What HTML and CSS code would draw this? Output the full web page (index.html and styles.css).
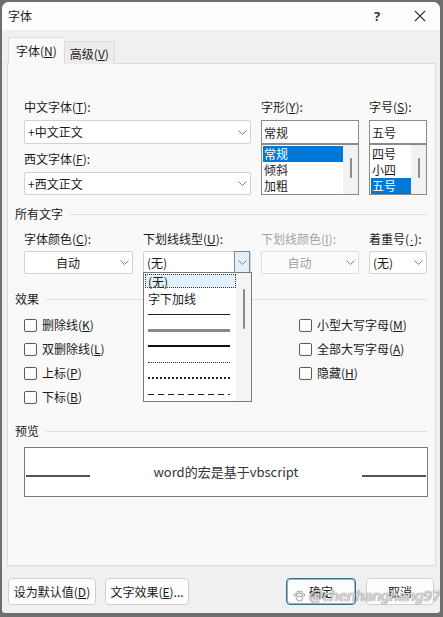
FILE: index.html
```html
<!DOCTYPE html>
<html lang="zh-CN">

<head>
    <meta name="viewport" content="width=device-width, initial-scale=1">
    <meta charset="UTF-8">
    <title>字体</title>

    <link rel="stylesheet" href="styles.css">
</head>

<body>
    <div class="window">
        <div class="titlebar">
            <span class="title">字体</span>
            <span class="help">?</span>
            <span class="close">
                <svg width="12" height="12" viewBox="0 0 12 12">
                    <path d="M1 1 L11 11 M11 1 L1 11" stroke="#333" stroke-width="1.1" fill="none" />
                </svg>
            </span>
        </div>

        <div class="client">
            <div class="tabs">
                <div class="tab active">字体(<u>N</u>)</div>
                <div class="tab">高级(<u>V</u>)</div>
            </div>

            <div class="panel">
                <div class="font-row">
                    <div class="col">
                        <div class="label">中文字体(<u>T</u>):</div>
                        <div class="combo tall"><span class="value">+中文正文</span><i class="chev"></i></div>
                        <div class="label second">西文字体(<u>F</u>):</div>
                        <div class="combo"><span class="value">+西文正文</span><i class="chev"></i></div>
                    </div>
                    <div class="col">
                        <div class="label">字形(<u>Y</u>):</div>
                        <div class="textbox">常规</div>
                        <div class="listbox">
                            <div class="items">
                                <div class="item selected">常规</div>
                                <div class="item">倾斜</div>
                                <div class="item">加粗</div>
                            </div>
                            <div class="vscroll"><span class="thumb"></span></div>
                        </div>
                    </div>
                    <div class="col">
                        <div class="label">字号(<u>S</u>):</div>
                        <div class="textbox">五号</div>
                        <div class="listbox">
                            <div class="items">
                                <div class="item">四号</div>
                                <div class="item">小四</div>
                                <div class="item selected">五号</div>
                            </div>
                            <div class="vscroll"><span class="thumb"></span></div>
                        </div>
                    </div>
                </div>

                <div class="group first"><span>所有文字</span></div>
                <div class="all-row">
                    <div class="field">
                        <div class="label">字体颜色(<u>C</u>):</div>
                        <div class="combo center"><span class="value">自动</span><i class="chev"></i></div>
                    </div>
                    <div class="field">
                        <div class="label">下划线线型(<u>U</u>):</div>
                        <div class="combo open">
                            <span class="value">(无)</span>
                            <i class="drop-btn"><i class="chev"></i></i>
                            <div class="droplist">
                                <div class="drop-items">
                                    <div class="drop-item focused">(无)</div>
                                    <div class="drop-item">字下加线</div>
                                    <div class="drop-item"><span class="ul single"></span></div>
                                    <div class="drop-item"><span class="ul words"></span></div>
                                    <div class="drop-item"><span class="ul thick"></span></div>
                                    <div class="drop-item"><span class="ul dotted"></span></div>
                                    <div class="drop-item"><span class="ul dotted-heavy"></span></div>
                                    <div class="drop-item"><span class="ul dashed"></span></div>
                                </div>
                                <div class="drop-scroll"><span class="thumb"></span></div>
                            </div>
                        </div>
                    </div>
                    <div class="field disabled">
                        <div class="label">下划线颜色(<u>I</u>):</div>
                        <div class="combo center"><span class="value">自动</span><i class="chev"></i></div>
                    </div>
                    <div class="field">
                        <div class="label">着重号(<u class="dot">·</u>):</div>
                        <div class="combo"><span class="value">(无)</span><i class="chev"></i></div>
                    </div>
                </div>

                <div class="group effects-title"><span>效果</span></div>
                <div class="effects">
                    <div class="check"><i class="box"></i>删除线(<u>K</u>)</div>
                    <div class="check"><i class="box"></i>小型大写字母(<u>M</u>)</div>
                    <div class="check"><i class="box"></i>双删除线(<u>L</u>)</div>
                    <div class="check"><i class="box"></i>全部大写字母(<u>A</u>)</div>
                    <div class="check"><i class="box"></i>上标(<u>P</u>)</div>
                    <div class="check"><i class="box"></i>隐藏(<u>H</u>)</div>
                    <div class="check"><i class="box"></i>下标(<u>B</u>)</div>
                </div>

                <div class="group preview-title"><span>预览</span></div>
                <div class="preview">
                    <span class="base-line"></span>
                    <span class="sample">word的宏是基于vbscript</span>
                    <span class="base-line"></span>
                </div>
            </div>

            <div class="buttons">
                <div class="btn btn-default-value">设为默认值(<u>D</u>)</div>
                <div class="btn btn-effects">文字效果(<u>E</u>)...</div>
                <div class="btn btn-ok">确定</div>
                <div class="btn btn-cancel">取消</div>
            </div>
        </div>

        <div class="watermark">
            <svg width="13" height="12" viewBox="0 0 13 12">
                <g fill="none" stroke="#9a9a9a" stroke-width="1">
                    <ellipse cx="6.5" cy="8.5" rx="3" ry="2.5" />
                    <circle cx="2.5" cy="5" r="1.3" />
                    <circle cx="5" cy="2.5" r="1.3" />
                    <circle cx="8" cy="2.5" r="1.3" />
                    <circle cx="10.5" cy="5" r="1.3" />
                </g>
            </svg>
            <span>@chenhanghang97</span>
        </div>
    </div>
</body>

</html>
```

FILE: styles.css
```css
body {
    margin: 0;
    padding: 2px 3px 4px 2px;
    background: #6e6e6e;
    font: 12px/16px "Noto Sans CJK SC", "Noto Sans", sans-serif;
    color: #1a1a1a;
    user-select: none;
}

u {
    text-decoration: underline;
    text-underline-offset: 1px;
}

u.dot {
    font-family: "DejaVu Sans", sans-serif;
    font-size: 10px;
    padding: 0 1px;
}

.window {
    position: relative;
    height: 611px;
    background: #f0f0f0;
    border-radius: 7px 7px 3px 3px;
    overflow: hidden;
}

/* title bar */

.titlebar {
    display: flex;
    align-items: center;
    height: 28px;
    padding: 0 0 0 6px;
    background: #fdfdfd;
}

.title {
    flex: 1;
    font-size: 12px;
}

.help {
    width: 20px;
    margin-right: 20px;
    font: bold 13px "Noto Sans", sans-serif;
    color: #333;
}

.close {
    display: flex;
    width: 26px;
}

/* tabs */

.client {
    padding: 8px 4px 0 5px;
}

.tabs {
    display: flex;
    align-items: flex-end;
    padding-left: 1px;
    height: 26px;
    margin-bottom: -1px;
    position: relative;
}

.tab {
    height: 23px;
    padding: 0 5px;
    line-height: 23px;
    background: #ececec;
    border: 1px solid #dcdcdc;
    border-bottom: none;
    box-sizing: border-box;
}

.tab.active {
    height: 27px;
    padding: 3px 7px 0 7px;
    background: #f9f9f9;
    line-height: 20px;
    border-right: none;
}

.panel {
    box-sizing: border-box;
    height: 503px;
    padding: 35px 8px 0 16px;
    background: #f9f9f9;
    border: 1px solid #dcdcdc;
}

.label {
    height: 16px;
    white-space: nowrap;
}

/* font selection */

.font-row {
    display: grid;
    grid-template-columns: 227px 98px 58px;
    column-gap: 10px;
}

.col .label {
    margin-bottom: 5px;
}

.col .label.second {
    margin-top: 7px;
}

.combo {
    position: relative;
    display: flex;
    align-items: center;
    height: 23px;
    padding: 0 0 0 3px;
    background: #fff;
    border: 1px solid #d2d2d2;
    border-radius: 2px;
    box-sizing: border-box;
}

.combo.tall {
    height: 24px;
}

.combo .value {
    flex: 1;
}

.combo.center .value {
    text-align: center;
    padding-right: 8px;
}

.chev {
    display: block;
    width: 16px;
    height: 100%;
    background: url("data:image/svg+xml,%3Csvg xmlns='http://www.w3.org/2000/svg' width='9' height='5'%3E%3Cpath d='M0.5 0.5 L4.5 4.5 L8.5 0.5' fill='none' stroke='%23808080'/%3E%3C/svg%3E") center no-repeat;
}

.textbox {
    height: 24px;
    padding-left: 2px;
    line-height: 23px;
    background: #fff;
    border: 1px solid #8a8a8a;
    box-sizing: border-box;
}

.listbox {
    display: flex;
    height: 51px;
    background: #fff;
    border: 1px solid #8a8a8a;
    box-sizing: border-box;
}

.items {
    flex: 1;
    padding: 1px 0 0 1px;
}

.item {
    height: 16px;
    padding-left: 1px;
    line-height: 16px;
}

.item.selected {
    background: #0078d7;
    color: #fff;
}

.vscroll {
    width: 15px;
    background: #f2f2f2;
    display: flex;
    justify-content: center;
    padding-top: 13px;
}

.vscroll .thumb {
    width: 2px;
    height: 20px;
    background: #8a8a8a;
    border-radius: 1px;
}

/* group headers */

.group {
    display: flex;
    align-items: center;
    margin-left: -9px;
    height: 16px;
}

.group::after {
    content: "";
    flex: 1;
    margin-left: 7px;
    border-top: 1px solid #dedede;
}

.group.first {
    margin-top: 11px;
}

.group.effects-title {
    margin-top: 17px;
}

.group.preview-title {
    margin-top: 14px;
}

/* all text row */

.all-row {
    display: grid;
    grid-template-columns: 109px 108px 98px 58px;
    column-gap: 10px;
    margin-top: 9px;
}

.field .label {
    margin-bottom: 4px;
}

.field.disabled {
    color: #a3a3a3;
}

.field.disabled .combo {
    background: #fbfbfb;
    border-color: #dedede;
}

.combo.open {
    z-index: 2;
}

.drop-btn {
    display: block;
    width: 14px;
    height: 21px;
    background: #e6eff7;
    border: 1px solid #6f8ea8;
}

.drop-btn .chev {
    width: 14px;
}

.droplist {
    position: absolute;
    left: -1px;
    top: 20px;
    width: 109px;
    height: 130px;
    display: flex;
    box-sizing: border-box;
    background: #fff;
    border: 1px solid #7a7a7a;
}

.drop-items {
    flex: 1;
    padding: 1px 0 0 1px;
}

.drop-item {
    height: 16px;
    padding-left: 3px;
    line-height: 15px;
    display: flex;
    align-items: center;
}

.drop-item.focused {
    height: 14px;
    margin: 0 0 2px 0;
    background: #e3f1fa;
    outline: 1px dotted #333;
    outline-offset: -1px;
}

.ul {
    display: block;
    width: 82px;
}

.ul.single {
    border-top: 1px solid #222;
}

.ul.words {
    height: 3px;
    background: #888;
}

.ul.thick {
    border-top: 2px solid #111;
}

.ul.dotted {
    border-top: 1px dotted #333;
}

.ul.dotted-heavy {
    border-top: 2px dotted #222;
}

.ul.dashed {
    height: 1px;
    background: repeating-linear-gradient(to right, #222 0 6px, transparent 6px 10px);
}

.drop-scroll {
    width: 15px;
    background: #f4f4f4;
    display: flex;
    justify-content: center;
    align-items: flex-start;
    padding-top: 16px;
}

.drop-scroll .thumb {
    width: 2px;
    height: 40px;
    background: #8a8a8a;
    border-radius: 1px;
}

/* effects */

.effects {
    display: grid;
    grid-template-columns: 275px auto;
    grid-auto-rows: 24px;
    margin-top: 6px;
}

.check {
    display: flex;
    align-items: center;
    white-space: nowrap;
}

.check .box {
    display: block;
    width: 11px;
    height: 11px;
    margin-right: 5px;
    background: #fff;
    border: 1px solid #5a5a5a;
    border-radius: 2px;
}

/* preview */

.preview {
    display: flex;
    align-items: center;
    width: 404px;
    height: 50px;
    margin-top: 8px;
    padding: 0 1px;
    box-sizing: border-box;
    background: #fff;
    border: 1px solid #7a7a7a;
}

.base-line {
    display: block;
    width: 64px;
    height: 2px;
    margin-top: 7px;
    background: #555;
}

.sample {
    flex: 1;
    text-align: center;
    font-size: 13px;
    color: #333;
}

/* buttons */

.buttons {
    display: flex;
    gap: 9px;
    margin-top: 12px;
    padding: 0 2px 0 1px;
}

.btn {
    height: 27px;
    line-height: 25px;
    text-align: center;
    white-space: nowrap;
    box-sizing: border-box;
    background: #fdfdfd;
    border: 1px solid #d0d0d0;
    border-radius: 4px;
}

.btn-default-value {
    width: 88px;
}

.btn-effects {
    width: 84px;
}

.btn-ok {
    width: 70px;
    margin-left: auto;
    border: 1px solid #3f6f8c;
    box-shadow: inset 0 0 0 1px #8fb3c8;
}

.btn-cancel {
    width: 68px;
    margin-left: 1px;
}

/* overlay watermark */

.watermark {
    position: absolute;
    left: 291px;
    top: 586px;
    display: flex;
    align-items: center;
    gap: 3px;
    font: italic 14px "DejaVu Sans", sans-serif;
    color: rgba(255, 255, 255, 0.75);
    text-shadow: 0 0 1px #777, 0 0 1px #777;
    letter-spacing: -0.3px;
}
```
